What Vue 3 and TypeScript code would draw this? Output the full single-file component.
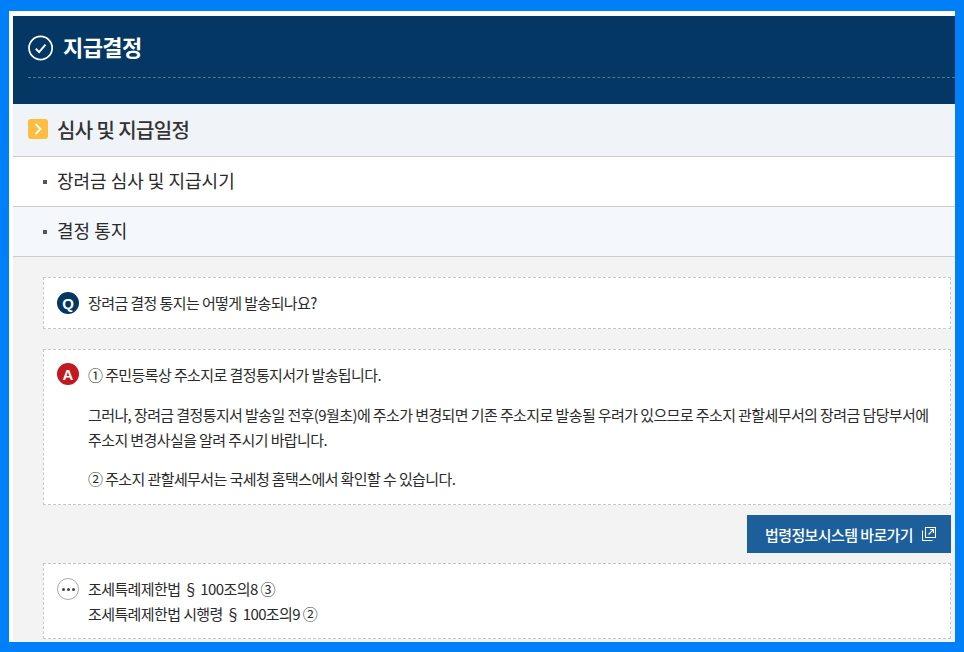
<script setup lang="ts">
const navRows = [
  { label: '장려금 심사 및 지급시기', active: false },
  { label: '결정 통지', active: true },
]
</script>

<template>
  <div class="frame">
    <main class="page">
      <header class="hero">
        <div class="hero-title">
          <svg class="check" width="26" height="26" viewBox="0 0 26 26" fill="none" aria-hidden="true">
            <circle cx="12.6" cy="13" r="11.6" stroke="#fff" stroke-width="1.7" />
            <path d="M7.8 13.8l3.3 3.3 6.4-7.4" stroke="#fff" stroke-width="2" />
          </svg>
          <h1>지급결정</h1>
        </div>
      </header>

      <section class="section-head">
        <span class="chev">
          <svg width="8" height="12" viewBox="0 0 8 12" fill="none" aria-hidden="true">
            <path d="M1.5 1l5 5-5 5" stroke="#fff" stroke-width="1.8" />
          </svg>
        </span>
        <h2>심사 및 지급일정</h2>
      </section>

      <div v-for="row in navRows" :key="row.label" class="nav-row" :class="{ active: row.active }">
        <i class="dot"></i>
        <span>{{ row.label }}</span>
      </div>

      <div class="content">
        <div class="card q-card">
          <span class="badge q">Q</span>
          <p>장려금 결정 통지는 어떻게 발송되나요?</p>
        </div>

        <div class="card a-card">
          <span class="badge a">A</span>
          <div class="answer">
            <p>① 주민등록상 주소지로 결정통지서가 발송됩니다.</p>
            <p class="para">그러나, 장려금 결정통지서 발송일 전후(9월초)에 주소가 변경되면 기존 주소지로 발송될 우려가 있으므로 주소지 관할세무서의 장려금 담당부서에 주소지 변경사실을 알려 주시기 바랍니다.</p>
            <p class="para">② 주소지 관할세무서는 국세청 홈택스에서 확인할 수 있습니다.</p>
          </div>
        </div>

        <div class="btn-row">
          <a class="law-btn">
            <span>법령정보시스템 바로가기</span>
            <svg width="14" height="14" viewBox="0 0 14 14" fill="none" aria-hidden="true">
              <path d="M3.5 10.5V0.5H13.5V10.5H3.5M0.5 3.5V13.5H10.5" stroke="#fff" stroke-width="1.1" />
              <path d="M6.5 7.5L11.5 2.5M8 2.5h3.5V6" stroke="#fff" stroke-width="1.1" />
            </svg>
          </a>
        </div>

        <div class="card ref-card">
          <span class="badge more">
            <i></i><i></i><i></i>
          </span>
          <div class="refs">
            <p>조세특례제한법 § 100조의8 ③</p>
            <p>조세특례제한법 시행령 § 100조의9 ②</p>
          </div>
        </div>
      </div>
    </main>
  </div>
</template>

<style>
html, body { margin: 0; background: #0080f8; }
</style>

<style scoped>
.frame {
  width: 964px;
  height: 652px;
  box-sizing: border-box;
  padding: 11px 9px 10px;
  background: #0080f8;
  font-family: "Noto Sans CJK KR", "Noto Sans", sans-serif;
  color: #2b2b2b;
}
.page {
  height: 631px;
  box-sizing: border-box;
  padding: 5px 0 0 4px;
  background: #fff;
  overflow: hidden;
}
p, h1, h2 { margin: 0; }
.hero {
  height: 88px;
  box-sizing: border-box;
  padding-left: 15px;
  background: #043763;
}
.hero-title {
  height: 62px;
  box-sizing: border-box;
  display: flex;
  align-items: center;
  gap: 9px;
  padding-top: 3px;
  border-bottom: 1px dashed #4f7693;
}
.check { flex: none; }
h1 {
  font-size: 22px;
  font-weight: 700;
  color: #fff;
  letter-spacing: -0.6px;
  line-height: 30px;
  margin-bottom: 4px;
}
.section-head {
  height: 53px;
  box-sizing: border-box;
  display: flex;
  align-items: center;
  gap: 9px;
  padding: 0 0 2px 15px;
  background: #f0f3f8;
  border-bottom: 1px solid #ccc;
}
.chev {
  width: 20px;
  height: 20px;
  display: flex;
  align-items: center;
  justify-content: center;
  background: #fdbd40;
  border-radius: 3px;
}
h2 {
  font-size: 20px;
  font-weight: 500;
  color: #333;
  letter-spacing: -0.6px;
}
.nav-row {
  height: 50px;
  box-sizing: border-box;
  display: flex;
  align-items: center;
  padding: 0 0 3px 30px;
  background: #fff;
  border-bottom: 1px solid #ccc;
  font-size: 18px;
}
.nav-row.active { background: #f4f7fc; }
.dot {
  width: 4px;
  height: 4px;
  margin: 3px 10px 0 0;
  background: #555;
}
.content {
  height: 385px;
  box-sizing: border-box;
  padding: 20px 4px 0 30px;
  background: #f3f3f3;
  font-size: 15px;
  letter-spacing: -0.6px;
  line-height: 25px;
}
.card {
  display: flex;
  gap: 9px;
  box-sizing: border-box;
  padding: 13px;
  background: #fff;
  border: 1px dashed #c8c8c8;
}
.badge {
  flex: none;
  width: 22px;
  height: 22px;
  border-radius: 50%;
  display: flex;
  align-items: center;
  justify-content: center;
  font-size: 15px;
  font-weight: 700;
  color: #fff;
  letter-spacing: 0;
  font-family: "Liberation Sans", sans-serif;
}
.q { background: #043763; }
.a { background: #c2181f; }
.more {
  gap: 2px;
  background: #fff;
  border: 1px solid #aaa;
  box-sizing: border-box;
}
.more i {
  width: 3px;
  height: 3px;
  border-radius: 50%;
  background: #444;
}
.q-card { height: 52px; padding-top: 12px; }
.q-card .badge { margin-top: 2px; }
.a-card { height: 156px; margin-top: 20px; padding-top: 12px; }
.a-card .badge { margin-top: 1px; }
.answer .para { margin-top: 15px; }
.answer .para + .para { margin-top: 14px; }
.btn-row {
  display: flex;
  justify-content: flex-end;
  margin: 10px 0;
}
.law-btn {
  width: 204px;
  height: 38px;
  box-sizing: border-box;
  display: flex;
  align-items: center;
  gap: 9px;
  padding-left: 18px;
  background: #1c5f9a;
  color: #fff;
  font-size: 15px;
  font-weight: 500;
}
.ref-card { height: 76px; padding-top: 12px; }
.ref-card .badge { margin-top: 2px; }
</style>
